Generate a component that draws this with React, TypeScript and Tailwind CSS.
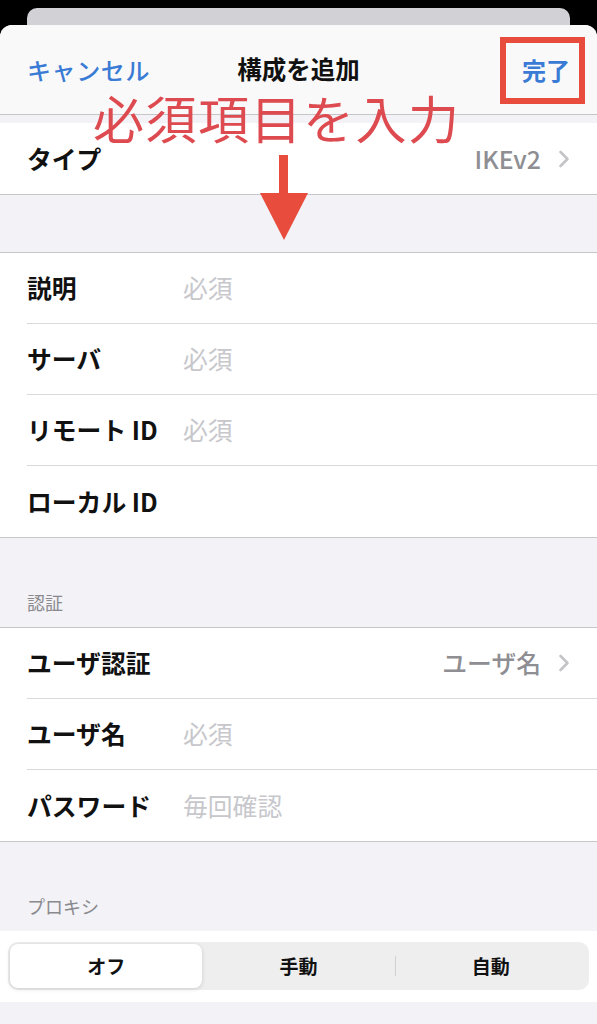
import React from "react";

const font = { fontFamily: '"Noto Sans CJK JP", "Noto Sans", sans-serif' };

function Chevron() {
  return (
    <svg width="12" height="18" viewBox="0 0 12 18" className="ml-[17px]">
      <polyline points="2.5,2 9.5,9 2.5,16" fill="none" stroke="#c4c4c7" strokeWidth="2.6" strokeLinecap="round" strokeLinejoin="round" />
    </svg>
  );
}

function Row({ label, placeholder, value, last }: { label: string; placeholder?: string; value?: string; last?: boolean }) {
  return (
    <div className="flex flex-col">
      <div className={(last ? "h-[71px]" : "h-[70px]") + " flex items-center pl-[27px] pr-[27px]"}>
        <div className="w-[156px] text-[24.8px] font-semibold text-[#111] whitespace-nowrap">{label}</div>
        {placeholder && <div className="text-[24.8px] text-[#c7c7cc]">{placeholder}</div>}
        {value && (
          <div className="ml-auto flex items-center">
            <span className="text-[24.8px] font-medium text-[#8e8e93]">{value}</span>
            <Chevron />
          </div>
        )}
      </div>
      {!last && <div className="ml-[27px] h-px bg-[#d9d9dc]" />}
    </div>
  );
}

export default function App() {
  return (
    <div className="w-[597px] h-[1024px] bg-black overflow-hidden relative flex flex-col pt-[8px]" style={font}>
      <div className="mx-[27px] h-[17px] bg-[#d1d1d6] rounded-t-[10px]" />
      <div className="flex-1 bg-[#f2f2f7] rounded-t-[12px] overflow-hidden flex flex-col">
        {/* Header */}
        <div className="h-[90px] shrink-0 bg-[#f9f9f9] border-b border-[#c6c6c8] grid grid-cols-[1fr_auto_1fr] items-center px-[27px]">
          <div className="text-[24px] font-medium text-[#3a7bd5] tracking-[0.6px]">キャンセル</div>
          <div className="text-[24.5px] font-bold text-[#111]">構成を追加</div>
          <div className="text-[24px] font-bold text-[#3a7bd5] text-right">完了</div>
        </div>
        <div className="h-[8px] shrink-0" />
        <div className="bg-white border-b border-[#c6c6c8]">
          <Row label="タイプ" value="IKEv2" last />
        </div>
        <div className="h-[57px] shrink-0" />
        <div className="bg-white border-t border-b border-[#c6c6c8]">
          <Row label="説明" placeholder="必須" />
          <Row label="サーバ" placeholder="必須" />
          <Row label="リモート ID" placeholder="必須" />
          <Row label="ローカル ID" last />
        </div>
        <div className="h-[89px] shrink-0 flex items-end px-[27px] pb-[15px]">
          <span className="text-[18px] leading-[20px] text-[#8a8a8e]">認証</span>
        </div>
        <div className="bg-white border-t border-b border-[#c6c6c8]">
          <Row label="ユーザ認証" value="ユーザ名" />
          <Row label="ユーザ名" placeholder="必須" />
          <Row label="パスワード" placeholder="毎回確認" last />
        </div>
        <div className="h-[89px] shrink-0 flex items-end px-[27px] pb-[15px]">
          <span className="text-[18px] leading-[20px] text-[#8a8a8e]">プロキシ</span>
        </div>
        <div className="bg-white h-[71px] shrink-0 px-[8px] pt-[11px]">
          <div className="h-[48px] bg-[#eeeeef] rounded-[10px] p-[2px] grid grid-cols-3 items-center">
            <div className="h-full bg-white rounded-[8px] shadow-[0_1px_4px_rgba(0,0,0,0.15)] flex items-center justify-center text-[19px] font-semibold text-[#111]">オフ</div>
            <div className="h-full flex items-center justify-center text-[19px] font-semibold text-[#111]">手動</div>
            <div className="h-full relative flex items-center justify-center text-[19px] font-semibold text-[#111]">
              <div className="absolute left-0 top-[12px] h-[20px] w-px bg-[#d0d0d4]" />
              自動
            </div>
          </div>
        </div>
      </div>

      {/* Annotations */}
      <div className="absolute left-[500px] top-[37px] w-[85px] h-[67px] border-[6px] border-[#e74c3c]" />
      <div className="absolute left-[93px] top-[92px] text-[51px] leading-none font-normal text-[#dd4a4f] tracking-[1.5px] whitespace-nowrap">必須項目を入力</div>
      <svg className="absolute left-[258px] top-[155px]" width="52" height="88" viewBox="0 0 52 88">
        <rect x="21" y="0" width="9" height="42" fill="#e74c3c" />
        <polygon points="2,38 50,38 26,85" fill="#e74c3c" />
      </svg>
    </div>
  );
}
